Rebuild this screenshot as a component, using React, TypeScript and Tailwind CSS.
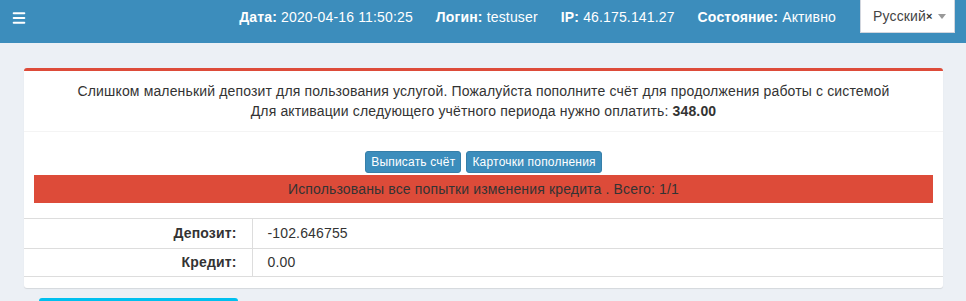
import { Menu } from "lucide-react";

const font = { fontFamily: '"Liberation Sans", Arial, Helvetica, sans-serif' };

function HeaderItem({ label, value }: { label: string; value: string }) {
  return (
    <span className="whitespace-nowrap">
      <b className="font-bold">{label}</b> {value}
    </span>
  );
}

export default function App() {
  return (
    <div className="w-[966px] h-[301px] overflow-hidden bg-[#ecf0f5] text-[14px] text-[#333] tracking-[0.15px]" style={font}>
      <header className="h-[43px] bg-[#3c8dbc] flex items-start text-white">
        <div className="h-[35px] pl-[11px] flex items-center">
          <Menu className="w-[16px] h-[16px]" strokeWidth={3} />
        </div>
        <div className="ml-auto h-[35px] flex items-center gap-[23px] text-[14px]">
          <HeaderItem label="Дата:" value="2020-04-16 11:50:25" />
          <HeaderItem label="Логин:" value="testuser" />
          <HeaderItem label="IP:" value="46.175.141.27" />
          <HeaderItem label="Состояние:" value="Активно" />
        </div>
        <div className="ml-[24px] mr-[11px] w-[95px] h-[33px] bg-white border border-[#d2d6de] border-t-0 flex items-center pl-[12px] text-[#444]">
          <span>Русский</span>
          <span className="text-[11px] font-bold text-[#333] leading-none">×</span>
          <span className="ml-auto mr-[8px] w-0 h-0 border-l-[4px] border-r-[4px] border-t-[5px] border-l-transparent border-r-transparent border-t-[#999]" />
        </div>
      </header>

      <div className="ml-[24px] mt-[25px] w-[919px] bg-white border-t-[3px] border-[#dd4b39] rounded-[3px] shadow-[0_1px_1px_rgba(0,0,0,0.1)] pb-[11px]">
        <div className="px-[10px] pt-[10px] pb-[10px] text-center leading-[20px] border-b border-[#f4f4f4]">
          <div>Слишком маленький депозит для пользования услугой. Пожалуйста пополните счёт для продолжения работы с системой</div>
          <div>
            Для активации следующего учётного периода нужно оплатить: <b>348.00</b>
          </div>
        </div>
        <div className="px-[10px] pt-[19px]">
          <div className="flex justify-center gap-[5px]">
            <button className="h-[22px] px-[5px] text-[12px] leading-[18px] text-white bg-[#3c8dbc] border border-[#367fa9] rounded-[3px] tracking-[0.2px]">
              Выписать счёт
            </button>
            <button className="h-[22px] px-[5px] text-[12px] leading-[18px] text-white bg-[#3c8dbc] border border-[#367fa9] rounded-[3px] tracking-[0.2px]">
              Карточки пополнения
            </button>
          </div>
          <div className="mt-[2px] h-[28px] bg-[#dd4b39] flex items-center justify-center text-[#333]">
            Использованы все попытки изменения кредита . Всего: 1/1
          </div>
        </div>
        <table className="mt-[15px] w-full border-collapse">
          <tbody>
            <tr className="border-t border-b border-[#ddd] h-[30px]">
              <td className="w-[228px] text-right font-bold pr-[15px] border-r border-[#ddd]">Депозит:</td>
              <td className="pl-[15px]">-102.646755</td>
            </tr>
            <tr className="border-b border-[#ddd] h-[28px]">
              <td className="text-right font-bold pr-[15px] border-r border-[#ddd]">Кредит:</td>
              <td className="pl-[15px]">0.00</td>
            </tr>
          </tbody>
        </table>
      </div>

      <div className="ml-[39px] mt-[10px] w-[199px] h-[30px] bg-[#00c0ef] rounded-[3px]" />
    </div>
  );
}
